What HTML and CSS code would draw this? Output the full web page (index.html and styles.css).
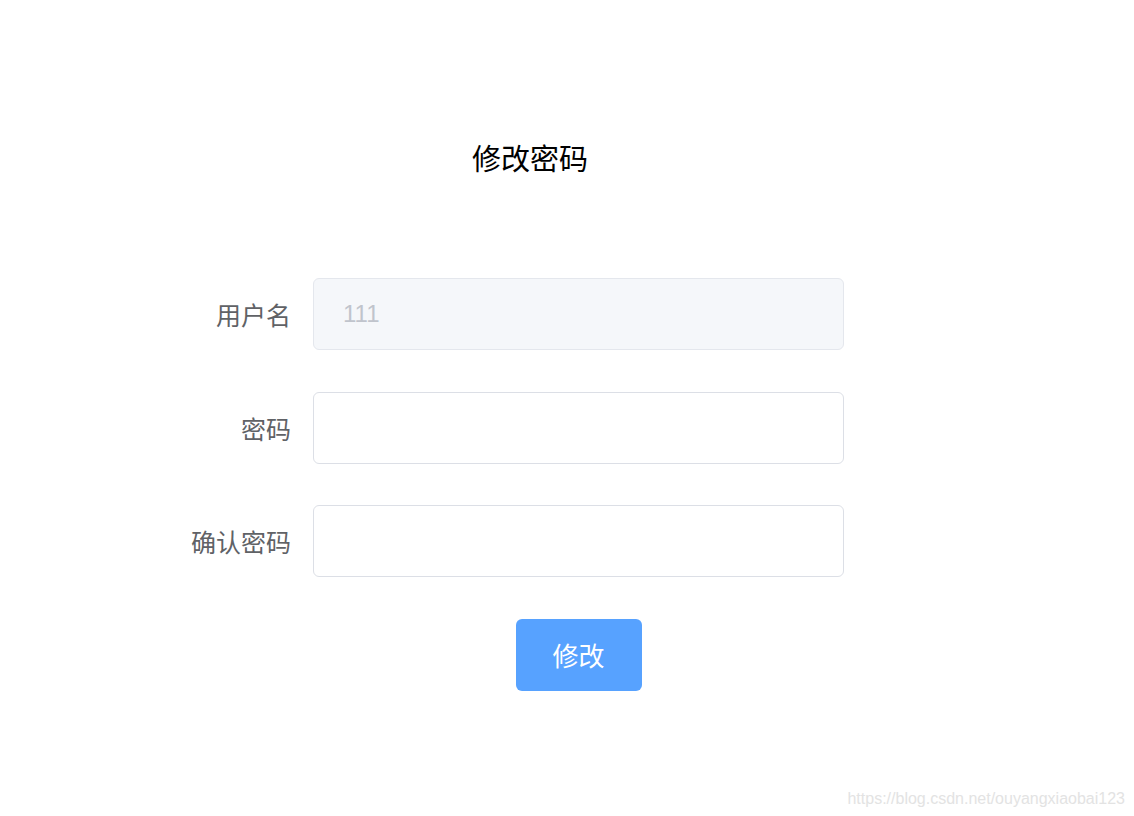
FILE: index.html
```html
<!DOCTYPE html>
<html lang="zh-CN">
<head>
    <meta charset="UTF-8">
    <meta name="viewport" content="width=device-width, initial-scale=1.0">
    <title>修改密码</title>
    <link rel="stylesheet" href="styles.css">
</head>
<body>
    <!-- 修改密码 -->
    <div class="wrap">
        <h2 class="title">修改密码</h2>

        <form class="pwd-form" onsubmit="return false">
            <label class="form-label" for="username">用户名</label>
            <input class="form-input" id="username" type="text" value="111" disabled>

            <label class="form-label" for="password">密码</label>
            <input class="form-input" id="password" type="password">

            <label class="form-label" for="confirm">确认密码</label>
            <input class="form-input" id="confirm" type="password">

            <div class="form-actions">
                <button class="submit-button" type="submit">修改</button>
            </div>
        </form>
    </div>

    <div class="watermark">https://blog.csdn.net/ouyangxiaobai123</div>
</body>
</html>
```

FILE: styles.css
```css
/* 基本样式 */
body {
    margin: 0;
    height: 100vh;
    font-family: "Microsoft YaHei", "Noto Sans CJK SC", "Liberation Sans", sans-serif;
    background-color: #fff;
    position: relative;
    overflow: hidden;
}

.wrap {
    width: 1060px;
    padding-top: 137px;
}

.title {
    margin: 0;
    text-align: center;
    font-size: 29px;
    font-weight: normal;
    line-height: 40px;
    color: #000;
}

.pwd-form {
    display: grid;
    grid-template-columns: 130px 531px;
    column-gap: 22px;
    row-gap: 41.5px;
    align-items: center;
    margin: 101px 0 0 161px;
}

.form-label {
    text-align: right;
    font-size: 25px;
    color: #606266;
}

.form-input {
    box-sizing: border-box;
    height: 72px;
    width: 100%;
    padding: 0 29px;
    font-family: "Liberation Sans", Arial, sans-serif;
    font-size: 24px;
    color: #606266;
    background-color: #fff;
    border: 1px solid #dcdfe6;
    border-radius: 6px;
    outline: none;
}

.form-input:disabled {
    background-color: #f5f7fa;
    border-color: #e4e7ed;
    color: #c0c4cc;
}

.form-actions {
    grid-column: 2;
    display: flex;
    justify-content: center;
}

.submit-button {
    width: 126px;
    height: 72px;
    font-family: inherit;
    font-size: 26px;
    color: #fff;
    background-color: #57a2ff;
    border: none;
    border-radius: 6px;
    cursor: pointer;
}

.watermark {
    position: absolute;
    right: 9px;
    bottom: 8px;
    font-family: "Liberation Sans", Arial, sans-serif;
    font-size: 16px;
    color: #e3e3e3;
}
```
